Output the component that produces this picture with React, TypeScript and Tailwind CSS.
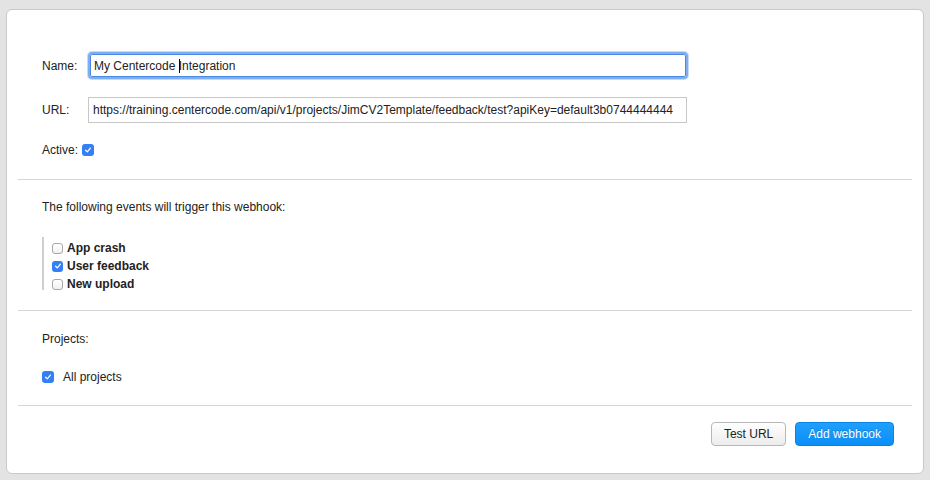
import { useState } from "react";

const EVENTOS = [
  { id: "crash", nombre: "App crash", activo: false },
  { id: "feedback", nombre: "User feedback", activo: true },
  { id: "upload", nombre: "New upload", activo: false },
];

function Check({ checked, size = "h-[11px] w-[11px]" }: { checked: boolean; size?: string }) {
  return checked ? (
    <span
      className={`${size} inline-flex shrink-0 items-center justify-center rounded-[3px] bg-[#3380f6]`}
    >
      <svg viewBox="0 0 10 10" className="h-[8px] w-[8px]">
        <path
          d="M2 5.3 L4.1 7.3 L8 2.6"
          fill="none"
          stroke="white"
          strokeWidth="1.6"
          strokeLinecap="round"
          strokeLinejoin="round"
        />
      </svg>
    </span>
  ) : (
    <span
      className={`${size} inline-block shrink-0 rounded-[3px] border border-[#a8a8a8] bg-gradient-to-b from-white to-[#f1f1f1]`}
    />
  );
}

export default function App() {
  const [eventos] = useState(EVENTOS);

  return (
    <div className="min-h-[480px] bg-[#e3e3e3] px-[6px] pt-[9px] font-['Liberation_Sans',Arial,sans-serif] text-[12px] leading-[14px] text-[#222]">
      <div className="h-[465px] rounded-[6px] border border-[#c9c9c9] bg-white px-[11px]">
        <div className="border-b border-[#d6d6d6] px-6 pt-[42px] pb-[21px]">
          <div className="flex h-[27px] items-center">
            <span className="w-[46px]">Name:</span>
            <div className="flex h-[27px] w-[600px] items-center rounded-[4px] border-2 border-[#7eaef0] pl-[4px] shadow-[inset_0_0_0_1px_#4a8ae4,0_0_0_1px_#c4dafa]">
              <span className="whitespace-pre">
                My Centercode{" "}
                <span className="-mr-px inline-block h-[14px] w-px bg-black align-[-3px]" />
                Integration
              </span>
            </div>
          </div>
          <div className="mt-[18px] flex h-[26px] items-center">
            <span className="w-[46px]">URL:</span>
            <div className="flex h-[26px] w-[599px] items-center border border-[#c8c8c8] pl-[4px]">
              https://training.centercode.com/api/v1/projects/JimCV2Template/feedback/test?apiKey=default3b0744444444
            </div>
          </div>
          <div className="mt-[19px] flex h-[16px] items-center gap-[4px]">
            <span>Active:</span>
            <Check checked size="h-[12px] w-[12px]" />
          </div>
        </div>

        <div className="border-b border-[#d6d6d6] px-6 pt-[20px] pb-[20px]">
          <p>The following events will trigger this webhook:</p>
          <div className="mt-[23px] h-[53px] border-l-2 border-[#cfcfcf] pt-[2px] pl-[8px]">
            {eventos.map((e) => (
              <label key={e.id} className="flex h-[18px] items-center gap-[4px] font-bold">
                <Check checked={e.activo} />
                <span>{e.nombre}</span>
              </label>
            ))}
          </div>
        </div>

        <div className="border-b border-[#d6d6d6] px-6 pt-[21px] pb-[21px]">
          <p>Projects:</p>
          <div className="mt-[24px] flex h-[14px] items-center gap-[9px]">
            <Check checked size="h-[12px] w-[12px]" />
            <span>All projects</span>
          </div>
        </div>

        <div className="flex justify-end gap-[9px] pt-[16px] pr-[18px]">
          <button
            type="button"
            className="h-[24px] rounded-[4px] border border-[#b7b7b7] bg-gradient-to-b from-white to-[#ececec] px-[12px] text-[12px] text-[#222]"
          >
            Test URL
          </button>
          <button
            type="button"
            className="h-[24px] rounded-[4px] border border-[#0b82e6] bg-gradient-to-b from-[#1ea0fd] to-[#0a8ef7] px-[12px] text-[12px] text-white [text-shadow:0_-1px_0_rgba(0,0,0,0.2)]"
          >
            Add webhook
          </button>
        </div>
      </div>
    </div>
  );
}
